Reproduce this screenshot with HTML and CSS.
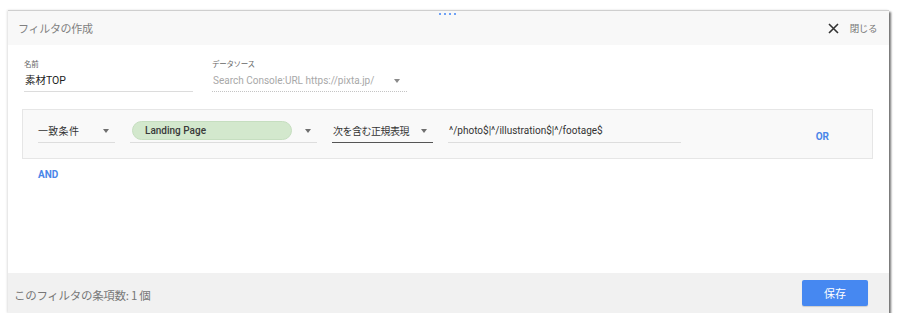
FILE: index.html
```html
<!DOCTYPE html>
<html lang="ja">
<head>
<meta charset="utf-8">
<title>フィルタの作成</title>
<link rel="stylesheet" href="styles.css">
</head>
<body>
<div class="dialog">
  <div class="header">
    <div class="title">フィルタの作成</div>
    <div class="dots"><span></span><span></span><span></span><span></span></div>
    <div class="close">
      <svg class="close-icon" width="11" height="11" viewBox="0 0 11 11"><path d="M1 1L10 10M10 1L1 10" stroke="#333" stroke-width="1.6" fill="none"/></svg>
      <span class="close-text">閉じる</span>
    </div>
  </div>
  <div class="body">
    <div class="fields">
      <div class="field field-name">
        <div class="label">名前</div>
        <div class="value">素材TOP</div>
      </div>
      <div class="field field-source">
        <div class="label">データソース</div>
        <div class="value value-disabled"><span>Search Console:URL https://pixta.jp/</span><span class="caret caret-light"></span></div>
      </div>
    </div>
    <div class="clause">
      <div class="ctl ctl-match"><span>一致条件</span><span class="caret"></span></div>
      <div class="ctl ctl-dim"><span class="pill">Landing Page</span><span class="caret"></span></div>
      <div class="ctl ctl-op"><span>次を含む正規表現</span><span class="caret"></span></div>
      <div class="ctl ctl-input"><span>^/photo$|^/illustration$|^/footage$</span></div>
      <div class="link or">OR</div>
    </div>
    <div class="link and">AND</div>
  </div>
  <div class="footer">
    <div class="count">このフィルタの条項数: 1 個</div>
    <button class="save">保存</button>
  </div>
</div>
</body>
</html>
```
FILE: styles.css
```css
* { box-sizing: border-box; }
html, body { margin: 0; }
body {
  background: #fff;
  padding: 10px 0 0 8px;
  font-family: Roboto, "Noto Sans CJK JP", sans-serif;
  color: #333;
}
.dialog {
  width: 881px;
  height: 303px;
  display: flex;
  flex-direction: column;
  background: #fff;
  border-top: 1px solid #cfcfcf;
  box-shadow: 2px 2px 2px rgba(0,0,0,0.55), -1px 0 2px rgba(0,0,0,0.12);
}
.header {
  position: relative;
  height: 34px;
  background: #f8f8f8;
  display: flex;
  align-items: center;
  justify-content: space-between;
  padding: 0 12px 0 10px;
}
.title {
  font-family: "Noto Sans CJK JP", sans-serif;
  font-size: 11px;
  color: #808080;
  letter-spacing: -0.3px;
}
.dots {
  position: absolute;
  left: 431px;
  top: 2px;
  display: flex;
  gap: 3px;
}
.dots span {
  width: 2px;
  height: 2px;
  background: #4285f4;
  border-radius: 1px;
}
.close {
  display: flex;
  align-items: center;
  gap: 11px;
}
.close-icon { display: block; }
.close-text {
  font-family: "Noto Sans CJK JP", sans-serif;
  font-size: 9.5px;
  color: #777;
  letter-spacing: -0.4px;
}
.body {
  flex: 1;
  padding: 14px 16px 0 14px;
}
.fields {
  display: flex;
  gap: 19px;
  padding-left: 2px;
}
.field-name { width: 169px; }
.field-source { width: 195px; }
.label {
  font-family: "Noto Sans CJK JP", sans-serif;
  font-size: 7.5px;
  line-height: 10px;
  color: #666;
  margin-bottom: 2px;
  letter-spacing: -0.3px;
}
.value {
  height: 21px;
  line-height: 20px;
  font-size: 10.5px;
  color: #222;
  border-bottom: 1px solid #dcdcdc;
  padding-left: 1px;
}
.value-disabled {
  display: flex;
  align-items: center;
  justify-content: space-between;
  color: #a8a8a8;
  font-size: 10px;
  border-bottom: 1px dotted #c4c4c4;
  padding-right: 7px;
}
.caret {
  width: 0;
  height: 0;
  border-left: 3.5px solid transparent;
  border-right: 3.5px solid transparent;
  border-top: 4px solid #6f6f6f;
}
.caret-light { border-top-color: #8a8a8a; }
.clause {
  margin-top: 17px;
  height: 50px;
  background: #f9f9f9;
  border: 1px solid #e6e6e6;
  display: flex;
  align-items: flex-start;
  padding: 10px 0 0 15px;
  gap: 15px;
}
.ctl {
  height: 23px;
  display: flex;
  align-items: center;
  justify-content: space-between;
  border-bottom: 1px solid #dddddd;
  font-family: "Noto Sans CJK JP", sans-serif;
  font-size: 10px;
  color: #333;
  padding-bottom: 1px;
}
.ctl-match { width: 77px; padding-right: 6px; letter-spacing: 0.3px; }
.ctl-dim { width: 187px; padding-left: 2px; padding-right: 6px; }
.ctl-op { width: 101px; padding-right: 6px; border-bottom: 1px solid #555; letter-spacing: -0.5px; padding-left: 1px; }
.ctl-input {
  width: 233px;
  font-family: Roboto, sans-serif;
  font-size: 10px;
  padding-left: 1px;
}
.pill {
  width: 160px;
  height: 19px;
  border-radius: 10px;
  background: #d3e8cd;
  border: 1px solid #c6dec0;
  font-family: Roboto, sans-serif;
  font-size: 10px;
  font-weight: 500;
  color: #3a3a3a;
  display: flex;
  align-items: center;
  padding-left: 12px;
}
.link {
  font-family: Roboto, sans-serif;
  font-size: 10px;
  font-weight: 700;
  color: #4a86e8;
}
.or {
  margin-left: auto;
  margin-right: 43px;
  margin-top: 10px;
  line-height: 14px;
}
.and {
  margin: 9px 0 0 16px;
  line-height: 14px;
}
.footer {
  height: 40px;
  background: #f1f1f1;
  display: flex;
  align-items: center;
  justify-content: space-between;
  padding: 0 21px 0 6px;
}
.count {
  font-family: "Noto Sans CJK JP", sans-serif;
  font-size: 11.5px;
  color: #777;
  letter-spacing: -0.3px;
  padding-top: 4px;
}
.save {
  width: 66px;
  height: 26px;
  border: none;
  border-radius: 2px;
  background: #4688f1;
  color: #fff;
  font-family: "Noto Sans CJK JP", sans-serif;
  font-size: 11px;
  box-shadow: 0 1px 1px rgba(0,0,0,0.15);
  padding: 0;
}
```
